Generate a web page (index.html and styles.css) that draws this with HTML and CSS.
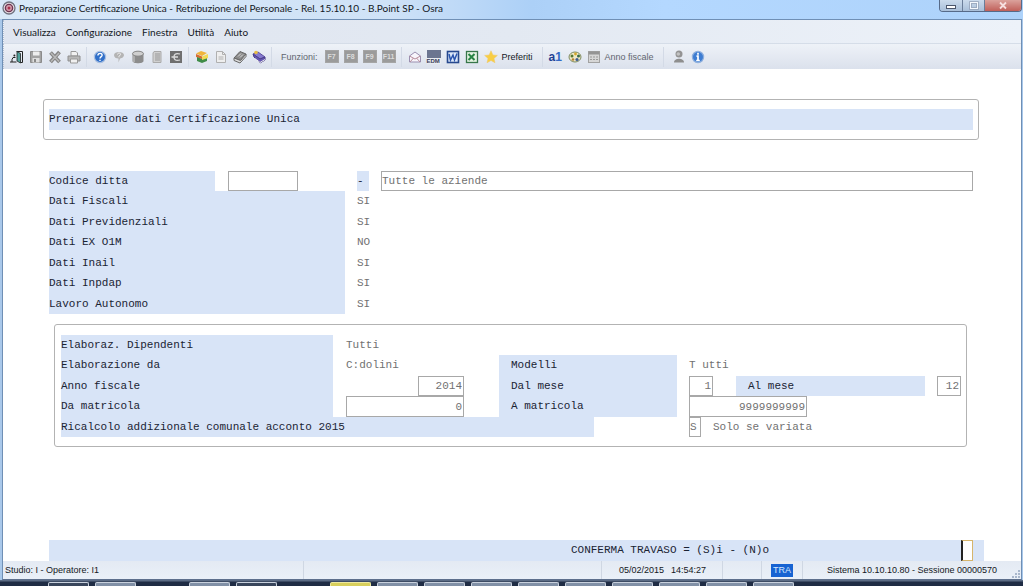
FILE: index.html
```
<!DOCTYPE html>
<html lang="it">
<head>
<meta charset="utf-8">
<title>Preparazione Certificazione Unica</title>
<link rel="stylesheet" href="styles.css">
</head>
<body>
<div class="window">
  <header class="titlebar">
    <svg class="app-icon" viewBox="0 0 14 14"><circle cx="7" cy="7" r="6" fill="#e9dfe5" stroke="#6f7280" stroke-width="1.3"/><circle cx="7" cy="7" r="3.6" fill="#d7a0ae" stroke="#6c3350" stroke-width="1.4"/><circle cx="7" cy="7" r="1.5" fill="#a8324c"/></svg>
    <h1 class="title">Preparazione Certificazione Unica - Retribuzione del Personale - Rel. 15.10.10 - B.Point SP - Osra</h1>
    <div class="win-controls">
      <button class="win-btn" aria-label="Riduci"><svg viewBox="0 0 12 10"><rect x="1.5" y="4.5" width="9" height="3" fill="#fff" stroke="#4b566b"/></svg></button>
      <button class="win-btn" aria-label="Ingrandisci"><svg viewBox="0 0 12 10"><rect x="2.5" y="1.5" width="7" height="6" fill="none" stroke="#8593ac" stroke-width="2.4"/><rect x="2.5" y="1.5" width="7" height="6" fill="none" stroke="#f4f8fd" stroke-width="1.2"/></svg></button>
      <button class="win-btn close" aria-label="Chiudi"><svg viewBox="0 0 12 10"><path d="M3 1.5 9 7.5M9 1.5 3 7.5" stroke="#f6dfdf" stroke-width="1.8"/></svg></button>
    </div>
  </header>

  <div class="frame">
    <nav class="menubar">
      <button class="menu">Visualizza</button>
      <button class="menu">Configurazione</button>
      <button class="menu">Finestra</button>
      <button class="menu">Utilità</button>
      <button class="menu">Aiuto</button>
    </nav>

    <div class="toolbar">
      <div class="group">
        <button class="tool" aria-label="Esci"><svg viewBox="0 0 14 14"><path d="M6.500 1.500h6v11h-2" fill="none" stroke="#222" stroke-width="1"/><path d="M7 1.500l3.500 2v9.500L7 11z" fill="#4fa39c" stroke="#222" stroke-width=".8"/><path d="M0 12h6.500M2 12V9.500L3 7.500h2.500" fill="none" stroke="#222" stroke-width="1"/><circle cx="4.400" cy="5.500" r="1" fill="#222"/></svg></button>
        <button class="tool" aria-label="Salva"><svg viewBox="0 0 14 14"><path d="M1.500 1.500h11v11h-11z" fill="#a3a3a3" stroke="#8b8b8b"/><path d="M4 1.500h6.500v4H4z" fill="#eee"/><path d="M3.500 8h7v4.500h-7z" fill="#dedede"/><path d="M5 9h2v3H5z" fill="#888"/></svg></button>
        <button class="tool" aria-label="Elimina"><svg viewBox="0 0 14 14"><path d="M2.500 2.500l9 9.500M11.500 2l-9 10" stroke="#858585" stroke-width="3.800"/><path d="M3 3l8 8.500M11 3l-8 8.500" stroke="#b9b9b9" stroke-width="1.500"/></svg></button>
        <button class="tool" aria-label="Stampa"><svg viewBox="0 0 14 14"><path d="M4 1.500h5l1.500 1.500v3H4z" fill="#f1f1f1" stroke="#999"/><path d="M1 6h12v5H1z" fill="#b7b7b7" stroke="#909090"/><path d="M3.500 9h7v4h-7z" fill="#f0f0f0" stroke="#999"/></svg></button>
      </div>
      <span class="sep"></span>
      <div class="group">
        <button class="tool" aria-label="Guida"><svg viewBox="0 0 14 14"><circle cx="7" cy="7" r="5.600" fill="#2f6fc9" stroke="#a9bfe0" stroke-width="1.200"/><path d="M4.900 5.500c0-3 4.500-2.700 4.200-.2C9 6.700 7 6.700 7 8.600M7 9.700v1.400" fill="none" stroke="#fff" stroke-width="1.400"/></svg></button>
        <button class="tool" aria-label="Suggerimento"><svg viewBox="0 0 14 14"><path d="M2 5c0-4 10-4 10 0 0 2.500-3 3.500-4 3.500L6.500 12.500V8.500C4 8.500 2 7.500 2 5z" fill="#b4b4b4"/><path d="M5.500 4.500c0-2 3.500-2 3 .2L7 6.300v1" fill="none" stroke="#f0f0f0"/></svg></button>
        <button class="tool" aria-label="Archivio"><svg viewBox="0 0 14 14"><path d="M1.500 4v7c0 3 11 3 11 0V4" fill="#8c8c8c"/><path d="M3 5v7" stroke="#b9b9b9" stroke-width="1.500"/><ellipse cx="7" cy="3.700" rx="5.500" ry="2.500" fill="#cfcfcf" stroke="#858585"/></svg></button>
        <button class="tool" aria-label="Elenco"><svg viewBox="0 0 14 14"><path d="M4 1.500h7v11H3V3z" fill="#d0d0d0" stroke="#aaa"/><path d="M5 4h5M5 6h5M5 8h5M5 10h5" stroke="#999"/></svg></button>
        <button class="tool" aria-label="Valuta"><svg viewBox="0 0 14 14"><rect x="1" y="1" width="12" height="12" fill="#6f6f6f"/><path d="M11 4c-5-1.500-6 1-6 3s1 4.500 6 3M2.500 7H9" fill="none" stroke="#ddd" stroke-width="1.300"/></svg></button>
      </div>
      <span class="sep"></span>
      <div class="group">
        <button class="tool" aria-label="Moduli"><svg viewBox="0 0 14 14"><path d="M1 3.500 6 1l6 2-5 3z" fill="#f0b43c"/><path d="M1 4l6 2.500V9L1 7z" fill="#d66b32"/><path d="M2 7l5 2 5-2v4l-5 2-5-2z" fill="#3f8c48"/><path d="M7 6.500 13 4v4l-6 2z" fill="#f2da55"/></svg></button>
        <button class="tool" aria-label="Documento"><svg viewBox="0 0 14 14"><path d="M2.500 1.500h6l3 3v8h-9z" fill="#eee" stroke="#b0b0b0"/><path d="M8.500 1.500v3h3M4.500 7h5M4.500 9h5" fill="none" stroke="#b0b0b0"/></svg></button>
        <button class="tool" aria-label="Libro"><svg viewBox="0 0 14 14"><path d="M1 8 7 1.500 13 4 7.500 10.500z" fill="#8a8a8a" stroke="#666"/><path d="M1 8v2.500L7 13l6-6.500V4l-5.500 6.500z" fill="#ddd" stroke="#666"/><path d="M5 6.500l3-3M7 7.500l3-3" stroke="#ddd"/></svg></button>
        <button class="tool" aria-label="Manuale"><svg viewBox="0 0 14 14"><path d="M1 4 6 2l7 5-5 2z" fill="#8579ce" stroke="#5d51a0"/><path d="M1 4l1 3 6 6 5-3V7L8 9z" fill="#6659b2" stroke="#4a3f8b"/><path d="M3 8.500l5 4 5-3" fill="none" stroke="#eee"/><circle cx="4" cy="2.500" r="1.800" fill="#e8bd45"/></svg></button>
      </div>
      <span class="sep"></span>
      <div class="group">
        <span class="tool-label muted">Funzioni:</span>
        <button class="fkey">F7</button>
        <button class="fkey">F8</button>
        <button class="fkey">F9</button>
        <button class="fkey">F11</button>
      </div>
      <span class="sep"></span>
      <div class="group">
        <button class="tool" aria-label="Posta"><svg viewBox="0 0 14 14"><path d="M1.500 6 7 2l5.500 4v6h-11z" fill="#f7f5fb" stroke="#9a8fb0"/><path d="M1.500 6 7 9l5.500-3M2 12l3.500-4M12 12 8.500 8" fill="none" stroke="#b98e9d"/></svg></button>
        <button class="tool edm" aria-label="EDM"><span class="edm-text">EDM</span></button>
        <button class="tool" aria-label="Word"><svg viewBox="0 0 14 14"><rect x="1.500" y="1.500" width="11" height="11" fill="#dce8fa" stroke="#26488e" stroke-width="1.600"/><path d="M3 4l1.500 6L7 5l1.500 5L11 3.500" fill="none" stroke="#2a55ae" stroke-width="1.500"/></svg></button>
        <button class="tool" aria-label="Excel"><svg viewBox="0 0 14 14"><rect x="1.500" y="1.500" width="11" height="11" fill="#e4f3e2" stroke="#37764a" stroke-width="1.300"/><path d="M3.500 4l6 6M9.500 4l-6 6" stroke="#288444" stroke-width="2"/></svg></button>
        <button class="tool wide"><svg viewBox="0 0 14 14"><path d="M7 .8 8.900 5l4.500.4-3.400 3 1 4.400L7 10.500l-4 2.300 1-4.400-3.400-3L5.100 5z" fill="#f8ce45" stroke="#f0c968" stroke-width=".5"/></svg><span class="tool-label">Preferiti</span></button>
      </div>
      <span class="sep"></span>
      <div class="group">
        <button class="tool letters"><b>a</b><b class="tall">1</b></button>
        <button class="tool" aria-label="Colori"><svg viewBox="0 0 14 14"><ellipse cx="7" cy="7" rx="6" ry="5" fill="#efe8c6" stroke="#7d8a5f"/><circle cx="4" cy="6" r="1.500" fill="#55752f"/><circle cx="7.500" cy="4" r="1.400" fill="#d3a62c"/><circle cx="10.500" cy="6" r="1.500" fill="#366a45"/><circle cx="9" cy="9.500" r="1.600" fill="#3e5c93"/><circle cx="5" cy="9.500" r="1.300" fill="#b48032"/></svg></button>
        <button class="tool wide"><svg viewBox="0 0 14 14"><rect x="1.500" y="1.500" width="11" height="11" fill="#d6d6d6" stroke="#a2a2a2"/><path d="M1.500 3h11" stroke="#949494" stroke-width="3"/><path d="M3 7h8M3 9.500h8" stroke="#999" stroke-dasharray="2 1"/></svg><span class="tool-label muted">Anno fiscale</span></button>
      </div>
      <span class="sep"></span>
      <div class="group user">
        <button class="tool" aria-label="Utente"><svg viewBox="0 0 14 14"><circle cx="7" cy="4" r="3.500" fill="#939393"/><circle cx="6.300" cy="4" r="1.800" fill="#c2c2c2"/><path d="M2 12.500c0-5 10-5 10 0z" fill="#8e8e8e"/></svg></button>
        <button class="tool" aria-label="Informazioni"><svg viewBox="0 0 14 14"><circle cx="7" cy="7" r="5.600" fill="#3e7dd2" stroke="#8fb0de" stroke-width="1.200"/><path d="M7 2.800v2M5.500 6.200H7v4M5.200 10.500h3.600" fill="none" stroke="#fff" stroke-width="1.700"/></svg></button>
      </div>
    </div>

    <main class="content">
      <section class="heading-box"><h2 class="band">Preparazione dati Certificazione Unica</h2></section>

      <form class="company">
        <label class="tag short" for="ditta">Codice ditta</label>
        <input class="field code" id="ditta">
        <span class="tag dash">-</span>
        <input class="field name" aria-label="Ragione sociale" value="Tutte le aziende">
        <span class="tag">Dati Fiscali</span><output class="value">SI</output>
        <span class="tag">Dati Previdenziali</span><output class="value">SI</output>
        <span class="tag">Dati EX O1M</span><output class="value">NO</output>
        <span class="tag">Dati Inail</span><output class="value">SI</output>
        <span class="tag">Dati Inpdap</span><output class="value">SI</output>
        <span class="tag">Lavoro Autonomo</span><output class="value">SI</output>
      </form>

      <form class="options">
        <span class="tag left">Elaboraz. Dipendenti</span><output class="opt-value">Tutti</output>

        <span class="tag left">Elaborazione da</span><output class="opt-value">C:dolini</output>
        <span class="tag mid">Modelli</span><output class="right-value">T utti</output>

        <label class="tag left" for="anno">Anno fiscale</label>
        <input class="field num year" id="anno" value="2014">
        <label class="tag mid" for="dal">Dal mese</label>
        <input class="field num month" id="dal" value="1">
        <label class="tag to" for="al">Al mese</label>
        <input class="field num last" id="al" value="12">

        <label class="tag left" for="da">Da matricola</label>
        <input class="field num from" id="da" value="0">
        <label class="tag mid" for="a">A matricola</label>
        <input class="field num until" id="a" value="9999999999">

        <label class="tag recalc" for="ricalcolo">Ricalcolo addizionale comunale acconto 2015</label>
        <div class="flag"><input class="field letter" id="ricalcolo" value="S"><span>Solo se variata</span></div>
      </form>

      <form class="confirm">
        <label for="conferma">CONFERMA TRAVASO = (S)i - (N)o</label>
        <input class="answer" id="conferma">
      </form>
    </main>

    <footer class="status">
      <span class="cell operator">Studio: I - Operatore: I1</span>
      <span class="cell spare"></span>
      <span class="cell clock"><span>05/02/2015</span><span>14:54:27</span></span>
      <span class="cell gap"></span>
      <span class="cell mode"><span class="badge">TRA</span></span>
      <span class="cell session">Sistema 10.10.10.80 - Sessione 00000570</span>
      <svg class="grip" viewBox="0 0 9 9"><path d="M6 1h2M6 4h2M6 7h2M3 4h2M3 7h2M0 7h2" stroke="#a9b7cc" stroke-width="2"/></svg>
    </footer>
  </div>
</div>
<div class="taskbar">
  <i class="task dark"></i><i class="task"></i><i class="task none"></i><i class="task"></i><i class="task dark"></i><i class="task none"></i><i class="task yellow"></i><i class="task"></i><i class="task"></i><i class="task"></i><i class="task"></i><i class="task"></i><i class="task"></i><i class="task"></i><i class="task"></i><i class="task"></i>
</div>
</body>
</html>
```
FILE: styles.css
```
* { box-sizing: border-box; }

body {
  margin: 0;
  min-height: 100vh;
  display: flex;
  flex-direction: column;
  font: 10px/14px Lato, "Noto Sans", sans-serif;
  color: #141824;
  background: #25324a;
}

button, input {
  font: inherit;
  color: inherit;
  margin: 0;
  padding: 0;
  border: 0;
  background: none;
  border-radius: 0;
}

svg { display: block; }

.window {
  flex: 1;
  display: flex;
  flex-direction: column;
  background: #a9c8ea;
  padding: 0 1px 0 2px;
}

/* title bar */
.titlebar {
  display: flex;
  align-items: flex-start;
  height: 19px;
  margin: 0 -1px 0 -2px;
  padding: 0 1px 0 2px;
  background: linear-gradient(90deg, #d8e8f8 0, #cfe2f7 38%, #acd0f7 52%, #b4d8ff 65%, #add2fa 100%);
}
.app-icon { width: 14px; height: 14px; margin-top: 1px; }
.title {
  margin: 1px 0 0 3px;
  font: inherit;
  white-space: nowrap;
}
.win-controls {
  display: flex;
  margin-left: auto;
  height: 12px;
  border: 1px solid #566a88;
  border-top: 0;
  border-radius: 0 0 4px 4px;
  overflow: hidden;
}
.win-btn {
  width: 22px;
  display: grid;
  place-items: center;
  background: linear-gradient(#cbdbec, #a9bfd9);
}
.win-btn + .win-btn { border-left: 1px solid #6a7d99; }
.win-btn svg { width: 12px; height: 10px; }
.win-btn.close { width: 37px; background: linear-gradient(#dba29c, #c0605a); }

.frame {
  flex: 1;
  display: flex;
  flex-direction: column;
  border: 1px solid #6f8fb5;
  border-bottom-color: #5d6f8c;
  background: #fff;
}

/* menu */
.menubar {
  display: flex;
  align-items: center;
  gap: 10px;
  height: 24px;
  padding-left: 9px;
  background: linear-gradient(90deg, #dfe5f0, #e3e9f2 50%, #edf2f9);
  border-bottom: 1px solid #d5dde8;
}

/* toolbar */
.toolbar {
  display: flex;
  align-items: center;
  height: 25px;
  padding-left: 6px;
  background: linear-gradient(#eef2f8, #dbe1ec);
}
.menubar, .toolbar {
  border-left: 1px dotted #b4c0d2;
}
.group { display: flex; align-items: center; gap: 5px; }
.sep { width: 1px; height: 20px; margin: 0 6px 0 5px; border-left: 1px solid #d3dae6; }
.tool { width: 14px; height: 14px; }
.tool svg { width: 14px; height: 14px; }
.tool.wide { width: auto; display: flex; align-items: center; gap: 4px; padding-right: 4px; }
.tool-label, .status { font-family: "Liberation Sans", Arial, sans-serif; font-size: 9px; }
.tool-label.muted { color: #62666f; }
.group > .tool-label { padding: 0 2px 0 3px; }
.fkey {
  width: 14px;
  height: 13px;
  border: 1px solid #a5a5a5;
  background: #9b9b9b;
  color: #dcdcdc;
  font: bold 7px/11px "Liberation Sans", Arial, sans-serif;
}
.edm { display: flex; align-items: flex-end; background: linear-gradient(#6b7590 60%, #e8ebf0 60%); }
.edm-text { font: bold 6px/6px "Liberation Sans", Arial, sans-serif; color: #3a4058; }
.letters { display: flex; color: #1f3f93; font: bold 12px/14px "Liberation Sans", Arial, sans-serif; }
.letters .tall { color: #3469c4; }
.user { padding-left: 2px; }

/* form area */
.content {
  flex: 1;
  display: flex;
  flex-direction: column;
  padding: 30px 37px 0 46px;
  font: 11px/20px "Liberation Mono", "Courier New", monospace;
  color: #1a2333;
}
.heading-box {
  margin: 0 5px 0 -6px;
  padding: 9px 5px;
  border: 1px solid #b3b3b3;
  border-radius: 3px;
}
.band {
  margin: 0;
  font: inherit;
  line-height: 21px;
  background: #d8e4f7;
}
.tag { background: #d8e4f7; white-space: nowrap; }
.value, .opt-value, .right-value, .field, .flag { color: #717171; }
.field {
  width: 100%;
  min-width: 0;
  border: 1px solid #a8a8a8;
  background: #fff;
}
.num { text-align: right; padding-right: 1px; }

.company, .options { display: grid; grid-auto-rows: 20px 21px; }
.company {
  grid-template-columns: 166px 142px 12px 12px 1fr;
  margin: 31px 11px 0 0;
}
.company .tag { grid-column: 1 / 3; margin-right: 12px; }
.company .tag.short { grid-column: 1; margin-right: 0; }
.company .code { grid-column: 2; width: 70px; margin-left: 13px; }
.company .tag.dash { grid-column: 3; margin-right: 0; }
.company .name { grid-column: 5; }
.value { grid-column: 3 / 6; }

.options {
  grid-template-columns: 272px 13px 118px 35px 178px 12px 47px 1fr 12px 24px;
  margin: 10px 17px 0 5px;
  padding: 10px 5px 9px 6px;
  border: 1px solid #b3b3b3;
  border-radius: 3px;
}
.options .left { grid-column: 1; }
.opt-value { grid-column: 3; }
.options .mid { grid-column: 5; padding-left: 12px; }
.right-value { grid-column: 7 / 9; }
.from { grid-column: 3; }
.year { grid-column: 3; justify-self: end; width: 46px; }
.month { grid-column: 7; width: 24px; }
.to { grid-column: 8; }
.options .to { padding-left: 12px; }
.last { grid-column: 10; }
.until { grid-column: 7 / 9; width: 118px; }
.recalc { grid-column: 1 / 6; width: 533px; }
.flag { grid-column: 7 / 10; display: flex; gap: 12px; }
.letter { width: 12px; }

.confirm {
  display: flex;
  justify-content: flex-end;
  gap: 192px;
  margin-top: auto;
  height: 21px;
  padding-right: 11px;
  background: #d8e4f7;
}
.answer { width: 12px; background: #fff; border: 1px solid #d6b56c; border-left: 2px solid #222; }

/* status bar */
.status {
  display: flex;
  align-items: center;
  height: 18px;
  background: linear-gradient(#e4eaf3, #eaf0f8);
}
.cell { height: 18px; line-height: 18px; border-right: 1px solid #cfd7e3; white-space: nowrap; }
.operator { flex: 1; padding-left: 2px; }
.spare { flex: 1; }
.clock { width: 121px; display: flex; gap: 7px; padding-left: 17px; }
.gap { width: 39px; }
.mode { width: 41px; display: grid; place-items: center; }
.badge { width: 22px; height: 13px; line-height: 13px; text-align: center; background: #1763d2; color: #d5e8ff; }
.session { width: 209px; border: 0; padding-left: 24px; }
.grip { width: 9px; height: 9px; align-self: flex-end; }

/* task bar */
.taskbar {
  display: flex;
  gap: 6px;
  height: 6px;
  padding: 2px 0 0 48px;
  background: linear-gradient(#5b6b84 1px, #1f2c44 2px);
}
.task { width: 41px; border: 1px solid #c9d1dd; border-bottom: 0; border-radius: 2px 2px 0 0; background: #8190a6; }
.task.dark { background: #39465c; }
.task.none { visibility: hidden; }
.task.yellow { background: #d8cf5c; border-color: #eee9a0; }
```
